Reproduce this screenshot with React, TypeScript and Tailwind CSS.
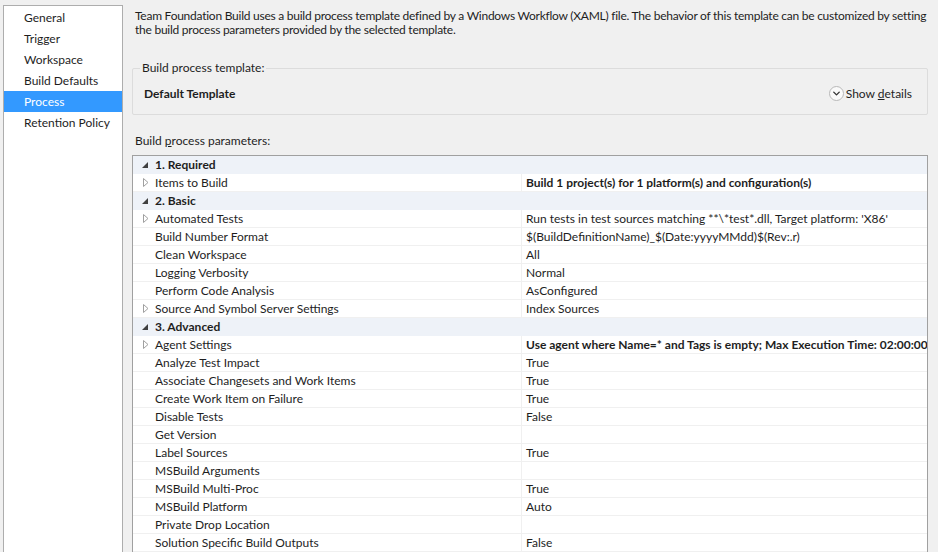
import { ChevronDown } from "lucide-react";

const font = { fontFamily: '"Segoe UI", Lato, "Noto Sans", Arial, sans-serif' };

type Row = { kind: "cat" | "item"; label: string; value?: string; bold?: boolean; expand?: boolean };

const rows: Row[] = [
  { kind: "cat", label: "1. Required" },
  { kind: "item", label: "Items to Build", value: "Build 1 project(s) for 1 platform(s) and configuration(s)", bold: true, expand: true },
  { kind: "cat", label: "2. Basic" },
  { kind: "item", label: "Automated Tests", value: "Run tests in test sources matching **\\*test*.dll, Target platform: 'X86'", expand: true },
  { kind: "item", label: "Build Number Format", value: "$(BuildDefinitionName)_$(Date:yyyyMMdd)$(Rev:.r)" },
  { kind: "item", label: "Clean Workspace", value: "All" },
  { kind: "item", label: "Logging Verbosity", value: "Normal" },
  { kind: "item", label: "Perform Code Analysis", value: "AsConfigured" },
  { kind: "item", label: "Source And Symbol Server Settings", value: "Index Sources", expand: true },
  { kind: "cat", label: "3. Advanced" },
  { kind: "item", label: "Agent Settings", value: "Use agent where Name=* and Tags is empty; Max Execution Time: 02:00:00; Max Wait Time: 04:00:00", bold: true, expand: true },
  { kind: "item", label: "Analyze Test Impact", value: "True" },
  { kind: "item", label: "Associate Changesets and Work Items", value: "True" },
  { kind: "item", label: "Create Work Item on Failure", value: "True" },
  { kind: "item", label: "Disable Tests", value: "False" },
  { kind: "item", label: "Get Version", value: "" },
  { kind: "item", label: "Label Sources", value: "True" },
  { kind: "item", label: "MSBuild Arguments", value: "" },
  { kind: "item", label: "MSBuild Multi-Proc", value: "True" },
  { kind: "item", label: "MSBuild Platform", value: "Auto" },
  { kind: "item", label: "Private Drop Location", value: "" },
  { kind: "item", label: "Solution Specific Build Outputs", value: "False" },
];

const nav = ["General", "Trigger", "Workspace", "Build Defaults", "Process", "Retention Policy"];

function Expander({ open }: { open: boolean }) {
  if (open) {
    return (
      <svg width="6" height="6" viewBox="0 0 6 6">
        <path d="M6 0 L6 6 L0 6 Z" fill="#404040" />
      </svg>
    );
  }
  return (
    <svg width="6" height="9" viewBox="0 0 6 9">
      <path d="M0.5 0.5 L5 4.5 L0.5 8.5 Z" fill="none" stroke="#a0a0a0" />
    </svg>
  );
}

export default function App() {
  return (
    <div className="flex w-[938px] h-[552px] bg-[#f0f0f0] text-[12px] text-[#1e1e1e] overflow-hidden" style={font}>
      <div className="ml-[3px] mt-[5px] w-[120px] h-[560px] bg-white border border-[#adadad] py-[1px]">
        {nav.map((n) => (
          <div
            key={n}
            className={`h-[21px] leading-[21px] pl-[20px] ${n === "Process" ? "bg-[#3399ff] text-white" : ""}`}
          >
            {n}
          </div>
        ))}
      </div>

      <div className="flex-1 pl-[9px] pr-[10px] pt-[3px] min-w-0">
        {/* description, wrapped where the dialog wraps it */}
        <p className="pl-[3px] leading-[14px] pt-[6px] tracking-[-0.25px] whitespace-nowrap">
          <span className="block">
            Team Foundation Build uses a build process template defined by a Windows Workflow (XAML) file. The behavior of this template can be customized by setting
          </span>
          <span className="block">the build process parameters provided by the selected template.</span>
        </p>

        <div className="relative mt-[31px] h-[47px] border border-[#dcdcdc] rounded-[2px]">
          <span className="absolute left-[7px] -top-[9px] bg-[#f0f0f0] px-[2px] leading-[16px]">Build process template:</span>
          <div className="flex items-center justify-between h-full pl-[11px] pr-[15px] pt-[4px]">
            <span className="font-bold">Default Template</span>
            <span className="flex items-center gap-[2px]">
              <span className="w-[15px] h-[15px] rounded-full border border-[#b8b8b8] bg-[#fafafa] flex items-center justify-center">
                <ChevronDown size={11} strokeWidth={3} className="text-[#333]" />
              </span>
              <span>
                Show <span className="underline">d</span>etails
              </span>
            </span>
          </div>
        </div>

        <div className="pl-[3px] mt-[18px] leading-[16px]">
          Build <span className="underline">p</span>rocess parameters:
        </div>

        {/* property grid */}
        <div className="mt-[6px] border border-[#a0a0a0] bg-white">
          {rows.map((r) =>
            r.kind === "cat" ? (
              <div key={r.label} className="flex items-center h-[18px] bg-[#eef2f8] border-b border-[#eef2f8]">
                <span className="w-[22px] flex justify-end pr-[7px]">
                  <Expander open />
                </span>
                <span className="font-bold">{r.label}</span>
              </div>
            ) : (
              <div key={r.label} className="flex h-[18px] border-b border-[#f0f0f0]">
                <span className="w-[22px] flex items-center justify-end pr-[6px]">
                  {r.expand && <Expander open={false} />}
                </span>
                <span className="w-[367px] leading-[17px] border-r border-[#f0f0f0] whitespace-nowrap">{r.label}</span>
                <span className={`pl-[4px] leading-[17px] whitespace-nowrap overflow-hidden flex-1 ${r.bold ? "font-bold" : ""}`}>
                  {r.value}
                </span>
              </div>
            )
          )}
        </div>
      </div>
    </div>
  );
}
